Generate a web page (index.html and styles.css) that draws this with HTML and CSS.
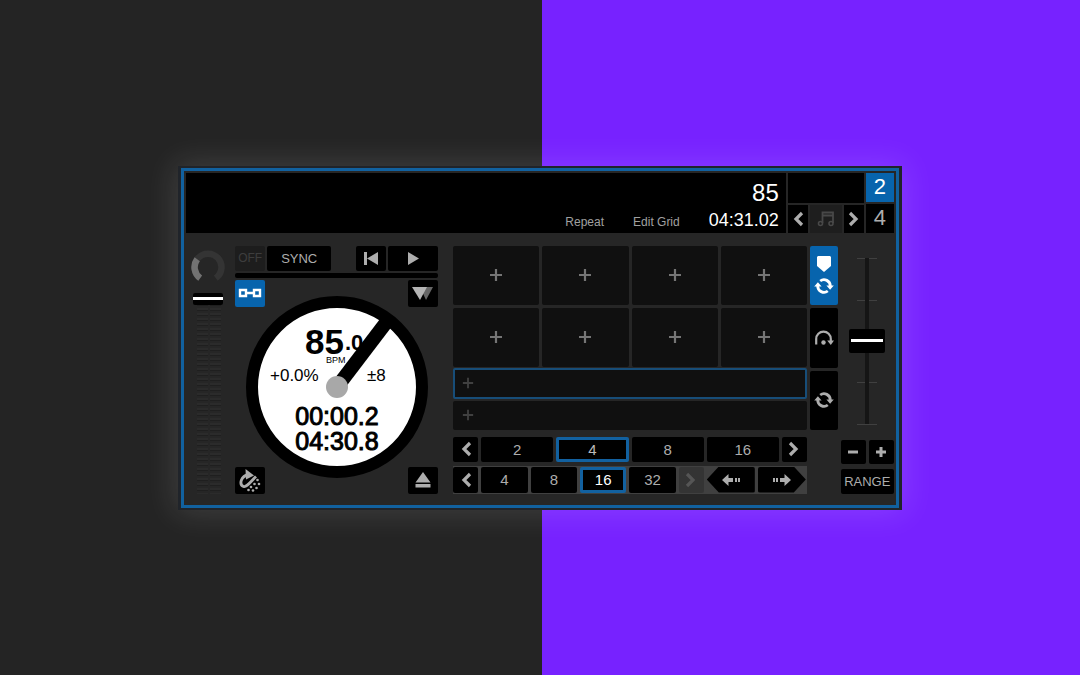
FILE: index.html
```html
<!DOCTYPE html>
<html lang="en">
<head>
<meta charset="utf-8">
<title>Deck 2</title>
<link rel="stylesheet" href="styles.css">
</head>
<body>
<svg class="defs" aria-hidden="true">
  <symbol id="left" viewBox="0 0 12 16"><path d="M10 2 4 8l6 6" fill="none" stroke="currentColor" stroke-width="3.2"/></symbol>
  <symbol id="right" viewBox="0 0 12 16"><path d="M2 2l6 6-6 6" fill="none" stroke="currentColor" stroke-width="3.2"/></symbol>
  <symbol id="plus" viewBox="0 0 14 14"><path d="M7 1v12M1 7h12" fill="none" stroke="currentColor" stroke-width="2.2"/></symbol>
  <symbol id="loop" viewBox="0 0 20 18"><g fill="none" stroke="currentColor" stroke-width="2.8"><path d="M6.200 4A6.300 6.300 0 0 1 16.300 9"/><path d="M13.800 14A6.300 6.300 0 0 1 3.700 9"/></g><path d="M12.400 8.400h7.400l-3.700 4.400zM.2 9.600h7.400L3.900 5.200z" fill="currentColor"/></symbol>
</svg>
<main class="stage">
  <section class="shell">
    <div class="frame">
      <header class="top">
        <div class="display">
          <div class="track-bpm">85</div>
          <div class="track-info"><button class="text-btn">Repeat</button><button class="text-btn">Edit Grid</button><span class="track-time">04:31.02</span></div>
        </div>
        <div class="key">
          <div class="key-name"></div>
          <button aria-label="Key down"><svg class="chev"><use href="#left"/></svg></button>
          <button class="note" aria-label="Key sync"><svg width="18" height="16" viewBox="0 0 18 16"><path d="M5.500 12V1.500H16V12M5.500 4.500H16" fill="none" stroke="currentColor" stroke-width="1.800"/><g fill="none" stroke="currentColor" stroke-width="1.600"><circle cx="3.500" cy="12.500" r="2"/><circle cx="14" cy="12.500" r="2"/></g></svg></button>
          <button aria-label="Key up"><svg class="chev"><use href="#right"/></svg></button>
        </div>
        <div class="decks"><button class="active">2</button><button>4</button></div>
      </header>

      <div class="body">
        <div class="level">
          <svg class="knob" viewBox="0 0 34 36"><path d="M9.200 32.200A13.500 13.500 0 1 1 24.800 32.200" fill="none" stroke="#343434" stroke-width="6.500"/><path d="M9.200 32.200A13.500 13.500 0 0 1 6.200 13.200" fill="none" stroke="#727272" stroke-width="6.500"/></svg>
          <input class="fader" type="range" min="0" max="100" value="100" aria-label="Level">
        </div>

        <div class="deck">
          <div class="transport">
            <button class="off">OFF</button>
            <button class="sync">SYNC</button>
            <button class="prev" aria-label="Previous track"><svg width="14" height="13" viewBox="0 0 14 14" preserveAspectRatio="none"><path d="M0 0h3v14H0zM14 0v14L3 7z" fill="currentColor"/></svg></button>
            <button class="play" aria-label="Play"><svg width="11" height="13" viewBox="0 0 12 14" preserveAspectRatio="none"><path d="M0 0l12 7-12 7z" fill="currentColor"/></svg></button>
          </div>
          <div class="phase"></div>
          <div class="jog">
            <svg class="platter" viewBox="0 0 182 182">
              <circle cx="91" cy="91" r="85" fill="#fff" stroke="#000" stroke-width="12"/>
              <text class="bpm" x="59" y="58">85</text>
              <text class="bpm-dec" x="99" y="54">.0</text>
              <text class="bpm-unit" x="80" y="67">BPM</text>
              <text class="tempo" x="24" y="85">+0.0%</text>
              <text class="tempo" x="121" y="85">±8</text>
              <text class="clock" x="91" y="129">00:00.2</text>
              <text class="clock" x="91" y="154">04:30.8</text>
              <path d="M91 91 142 24" stroke="#000" stroke-width="14"/>
              <circle cx="91" cy="91" r="11" fill="#a8a8a8"/>
            </svg>
            <button class="corner link" aria-label="Link"><svg width="24" height="12" viewBox="0 0 24 12"><path d="M2 3h6v6H2zM16 3h6v6h-6zM8 6h8" fill="none" stroke="currentColor" stroke-width="2.400"/></svg></button>
            <button class="corner right" aria-label="Flip"><svg width="22" height="13" viewBox="0 0 22 13"><path d="M8 0h13l-7 13z" fill="#666"/><path d="M0 0h15L8 13z" fill="#b4b4b4"/></svg></button>
            <button class="corner bottom" aria-label="Slip"><svg width="24" height="24" viewBox="0 0 24 24"><path d="M11 6.500C2.500 8 1 16.500 5.500 18.500c3 1 6-3.500 12.500-10" fill="none" stroke="currentColor" stroke-width="2.800"/><path d="M7.500 1l8.500 6.500-8 4z" fill="currentColor"/><g fill="currentColor"><circle cx="19.500" cy="12" r="1.300"/><circle cx="21" cy="16" r="1.300"/><circle cx="16.500" cy="16" r="1.300"/><circle cx="18.500" cy="20" r="1.300"/><circle cx="13" cy="19" r="1.300"/><circle cx="10.500" cy="22" r="1.300"/><circle cx="15" cy="22.500" r="1.300"/></g></svg></button>
            <button class="corner right bottom" aria-label="Eject"><svg width="16" height="16" viewBox="0 0 16 16"><path d="M8 0l7.500 10.500H.5zM.5 12h15v3.500H.5z" fill="currentColor"/></svg></button>
          </div>
        </div>

        <div class="perform">
          <div class="pads">
            <button aria-label="Cue 1"><svg><use href="#plus"/></svg></button><button aria-label="Cue 2"><svg><use href="#plus"/></svg></button><button aria-label="Cue 3"><svg><use href="#plus"/></svg></button><button aria-label="Cue 4"><svg><use href="#plus"/></svg></button>
            <button aria-label="Cue 5"><svg><use href="#plus"/></svg></button><button aria-label="Cue 6"><svg><use href="#plus"/></svg></button><button aria-label="Cue 7"><svg><use href="#plus"/></svg></button><button aria-label="Cue 8"><svg><use href="#plus"/></svg></button>
          </div>
          <button class="slot selected" aria-label="Loop 1"><svg><use href="#plus"/></svg></button>
          <button class="slot" aria-label="Loop 2"><svg><use href="#plus"/></svg></button>
          <div class="beats">
            <button class="step" aria-label="Shorter"><svg class="chev"><use href="#left"/></svg></button>
            <button>2</button><button class="current">4</button><button>8</button><button>16</button>
            <button class="step" aria-label="Longer"><svg class="chev"><use href="#right"/></svg></button>
          </div>
          <div class="jumps">
            <button class="step" aria-label="Smaller"><svg class="chev"><use href="#left"/></svg></button>
            <button>4</button><button>8</button><button class="current">16</button><button>32</button>
            <button class="step disabled" aria-label="Larger"><svg class="chev"><use href="#right"/></svg></button>
            <button class="jump back" aria-label="Jump back"><svg width="18" height="12" viewBox="0 0 18 12"><path d="M0 6l6.500-6v4H11v4H6.500v4zM13 4h2v4h-2zM16 4h2v4h-2z" fill="currentColor"/></svg></button>
            <button class="jump ahead" aria-label="Jump ahead"><svg width="18" height="12" viewBox="0 0 18 12"><path d="M18 6l-6.500-6v4H7v4h4.500v4zM5 4H3v4h2zM2 4H0v4h2z" fill="currentColor"/></svg></button>
          </div>
        </div>

        <div class="modes">
          <button class="active" aria-label="Cues"><svg width="16" height="16" viewBox="0 0 16 16"><path d="M2 0h12l1 1v9l-7 6-7-6V1z" fill="currentColor"/></svg><svg class="loop"><use href="#loop"/></svg></button>
          <button aria-label="Roll"><svg width="20" height="16" viewBox="0 0 20 16"><path d="M2.200 14.500V9a7.300 7.300 0 0 1 14.600 0v2" fill="none" stroke="currentColor" stroke-width="2.200"/><path d="M13.200 10.500h6.800L16.800 15z" fill="currentColor"/><circle cx="9.500" cy="12.500" r="2.200" fill="currentColor"/></svg></button>
          <button aria-label="Loops"><svg class="loop"><use href="#loop"/></svg></button>
        </div>

        <div class="pitch">
          <input class="pitch-fader" type="range" min="-8" max="8" value="0" aria-label="Pitch">
          <button aria-label="Pitch down"><svg width="12" height="12" viewBox="0 0 12 12"><path d="M1 6h10" stroke="currentColor" stroke-width="3"/></svg></button>
          <button aria-label="Pitch up"><svg width="12" height="12" viewBox="0 0 12 12"><path d="M1 6h10M6 1v10" stroke="currentColor" stroke-width="3"/></svg></button>
          <button class="range">RANGE</button>
        </div>
      </div>
    </div>
  </section>
</main>
</body>
</html>
```
FILE: styles.css
```css
* { box-sizing: border-box; }
body { margin: 0; font-family: "Liberation Sans", Arial, sans-serif; }
.defs { position: absolute; width: 0; height: 0; }
button {
  display: flex; align-items: center; justify-content: center;
  margin: 0; padding: 0; border: 0; border-radius: 2px; min-width: 0;
  background: #000; color: #adadad; font: inherit;
}
.stage {
  min-height: 100vh; display: grid; place-items: center;
  background: linear-gradient(90deg, #242424 calc(50% + 2px), #7722ff calc(50% + 2px));
}
.shell {
  width: 67%; padding: 2px 3px; background: #20242a;
  box-shadow: 0 0 30px 3px rgba(255, 255, 255, 0.13);
}
.frame { border: 3px solid #11619f; padding: 2px 2px 0; background: #262626; }

.top { display: flex; gap: 2px; height: 60px; background: #262626; }
.display {
  flex: 1; padding: 6px 7px 0 0; background: #000; color: #fff;
  display: flex; flex-direction: column; align-items: flex-end;
}
.track-bpm { font-size: 24px; line-height: 28px; }
.track-info { display: flex; align-items: baseline; line-height: 26px; }
.text-btn { font-size: 12px; background: none; color: #a0a0a0; margin-right: 29px; }
.track-time { font-size: 18px; }
.key { display: grid; grid-template-columns: 20px 32px 20px; grid-template-rows: 30px 28px; gap: 2px; }
.key-name { grid-column: 1 / 4; background: #000; }
.key button { border-radius: 0; }
.key .note { background: #1e1e1e; color: #484848; }
.decks { display: grid; grid-template-rows: 29px 29px; gap: 2px; width: 28px; font-size: 22px; }
.decks button { border-radius: 0; }
.chev { width: 12px; height: 16px; }
.decks .active, .modes .active { background: #0764ad; color: #fff; }

.body { display: flex; padding: 13px 0 11px 5px; }
.level { width: 34px; display: flex; flex-direction: column; align-items: center; }
.knob { width: 34px; height: 36px; }
.fader, .pitch-fader {
  appearance: none; margin: 0; writing-mode: vertical-lr; direction: rtl;
}
.fader {
  width: 30px; height: 201px; margin-top: 11px;
  background:
    linear-gradient(90deg, #262626 4px, transparent 4px 15px, #262626 15px 17px, transparent 17px 28px, #262626 28px),
    repeating-linear-gradient(#2b2b2b 0 2px, #1f1f1f 2px 3px, #262626 3px 5px);
}
.fader::-webkit-slider-thumb {
  appearance: none; width: 30px; height: 12px; border-radius: 2px;
  background: linear-gradient(#000 4px, #fff 4px 7px, #000 7px);
}

.deck { width: 203px; margin-left: 10px; }
.transport { display: grid; grid-template-columns: 30px 64px 1fr 30px 50px; column-gap: 2px; height: 25px; font-size: 13px; }
.transport .off { font-size: 12px; background: #1d1d1d; color: #3d3d3d; }
.prev { grid-column: 4; }
.phase { height: 5px; margin: 2px 0; border-radius: 2px; background: #000; }
.jog { display: grid; height: 214px; }
.platter { grid-area: 1 / 1; place-self: center; width: 182px; height: 182px; }
.corner { grid-area: 1 / 1; place-self: start; width: 30px; height: 27px; }
.corner.right { justify-self: end; }
.corner.bottom { align-self: end; }
.link { background: #0764ad; color: #fff; }
.bpm { font-size: 35px; font-weight: bold; }
.bpm-dec { font-size: 22px; font-weight: bold; }
.bpm-unit { font-size: 9px; }
.tempo { font-size: 17px; }
.clock { font-size: 25px; text-anchor: middle; stroke: #000; stroke-width: 1px; }

.perform { flex: 1; margin-left: 15px; }
.pads { display: grid; grid-template-columns: repeat(4, 1fr); grid-auto-rows: 59px; gap: 3px; }
.pads button, .slot { background: #101010; color: #757575; }
.pads svg { width: 14px; height: 14px; }
.slot { width: 100%; height: 29px; margin-top: 2px; padding-left: 9px; justify-content: flex-start; color: #404040; }
.slot.selected { height: 31px; margin-top: 1px; padding-left: 7px; border: 2px solid #174d78; }
.slot svg { width: 12px; height: 12px; }
.beats, .jumps { display: grid; gap: 3px; font-size: 15px; }
.beats { grid-template-columns: 25px repeat(4, 1fr) 25px; height: 25px; margin-top: 7px; }
.jumps {
  grid-template-columns: 25px repeat(4, 1fr) 25px 48px 48px;
  height: 28px; margin-top: 4px; padding: 1px 1px 1px 0; background: #404040;
}
.current { border: 3px solid #1261a0; color: #bbb; }
.jumps .current { color: #fff; }
.jumps .disabled { background: #343434; color: #555; }
.jump.back { clip-path: polygon(0 50%, 12px 0, 100% 0, 100% 100%, 12px 100%); }
.jump.ahead { clip-path: polygon(0 0, calc(100% - 12px) 0, 100% 50%, calc(100% - 12px) 100%, 0 100%); }

.modes { display: grid; grid-template-rows: 59px 60px 59px; gap: 3px; align-content: start; width: 28px; margin: 0 3px; }
.modes .active { flex-direction: column; gap: 5px; }
.loop { width: 20px; height: 18px; }

.pitch { display: grid; grid-template-columns: 1fr 1fr; grid-template-rows: 190px 24px 25px; gap: 4px 3px; width: 53px; align-content: space-between; }
.pitch-fader {
  grid-column: 1 / 3; justify-self: center; width: 36px; height: 190px;
  background:
    linear-gradient(#151515, #151515) 50% 50% / 4px 166px no-repeat,
    linear-gradient(#404040, #404040) 50% 12px / 20px 1px no-repeat,
    linear-gradient(#404040, #404040) 50% 54px / 20px 1px no-repeat,
    linear-gradient(#404040, #404040) 50% 136px / 20px 1px no-repeat,
    linear-gradient(#404040, #404040) 50% 178px / 20px 1px no-repeat;
}
.pitch-fader::-webkit-slider-thumb {
  appearance: none; width: 36px; height: 24px; border-radius: 2px;
  background: linear-gradient(#fff, #fff) 50% 50% / 32px 3px no-repeat #000;
}
.range { grid-column: 1 / 3; font-size: 13px; }
```
